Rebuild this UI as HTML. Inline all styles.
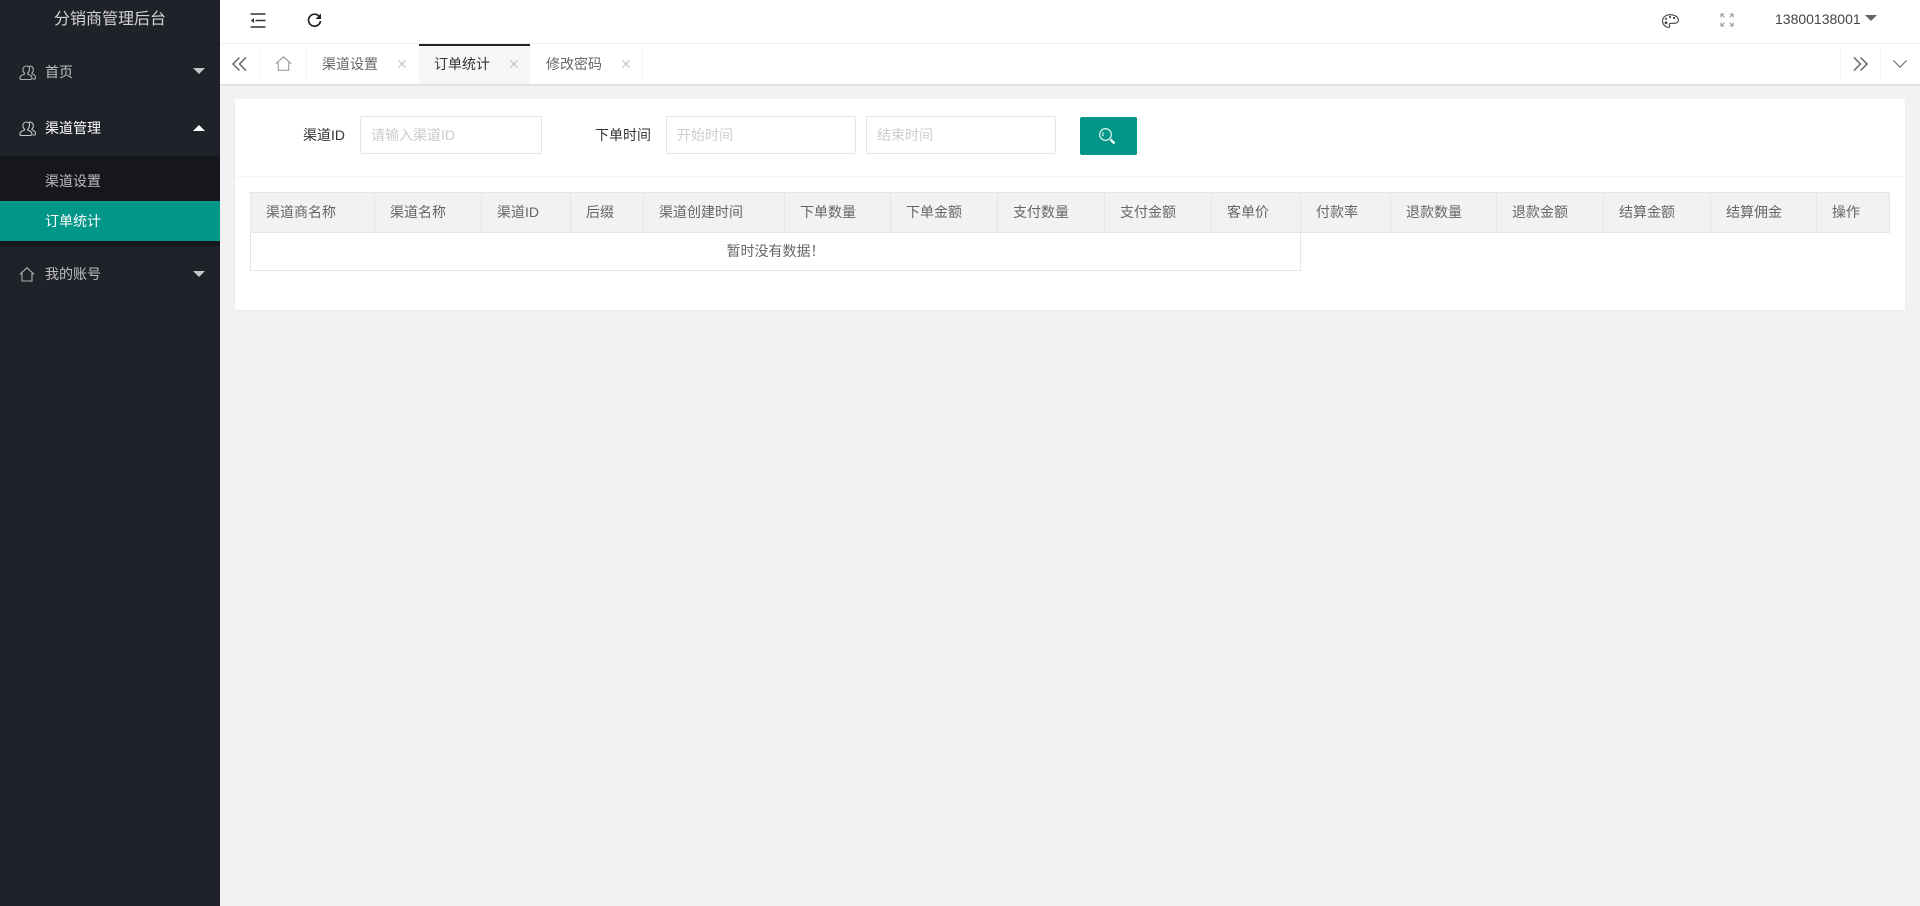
<!DOCTYPE html>
<html lang="zh-CN">
<head>
<meta charset="utf-8">
<title>分销商管理后台</title>
<style>
html,body{margin:0;padding:0;width:1920px;height:906px;overflow:hidden;background:#f2f2f2;font-family:"Liberation Sans","Noto Sans CJK SC",sans-serif;font-size:14px;color:#666}
div,span{box-sizing:border-box}
.a{position:absolute}
.t{position:absolute;white-space:nowrap;line-height:20px;height:20px}
svg{position:absolute;overflow:visible}
.th{position:absolute;top:193px;height:39px;line-height:38px;color:#666;padding-left:15px;border-left:1px solid #e6e6e6;white-space:nowrap}
.inp{position:absolute;top:116px;height:38px;background:#fff;border:1px solid #e6e6e6;border-radius:2px;line-height:36px;color:#ccc;padding-left:10px}
.tc{position:absolute;font-size:14px}
</style>
</head>
<body>
<!-- sidebar -->
<div class="a" style="left:0;top:0;width:220px;height:906px;background:#20222a"></div>
<div class="a" style="left:0;top:43px;width:220px;height:1px;background:#1d1f26"></div>
<div class="t" style="left:0;top:10px;width:220px;text-align:center;font-size:16px;color:rgba(255,255,255,.8)">分销商管理后台</div>

<svg style="left:19px;top:65px" width="17" height="15" viewBox="0 0 17 15" fill="none" stroke="#b0b1b4" stroke-width="1.1"><path d="M7.500 1c-2.200 0-3.600 1.600-3.600 3.800 0 1.400.6 2.600 1.600 3.400v.9c-1.800.6-3.600 1.500-4.300 2.600-.4.700-.2 2.800.3 2.800h10c1.300 0 1.700-1.600 1.200-2.800-.6-1.100-2.500-2-4-2.600v-.9c1-.8 1.600-2 1.600-3.400C11.100 2.600 9.700 1 7.500 1z"/><path d="M10 1.200c2.300-.5 4.300 1.100 4.300 3.500 0 1.400-.5 2.600-1.400 3.300v.9c1.500.5 2.800 1.300 3.300 2.200.5.900.3 2.900-.7 2.900h-2"/></svg>
<div class="t" style="left:45px;top:62px;color:rgba(255,255,255,.7)">首页</div>
<svg style="left:193px;top:68px" width="12" height="6"><path d="M0 0h12L6 6z" fill="#c6c7c9"/></svg>

<svg style="left:19px;top:121px" width="17" height="15" viewBox="0 0 17 15" fill="none" stroke="#c8c8ca" stroke-width="1.1"><path d="M7.500 1c-2.200 0-3.600 1.600-3.600 3.800 0 1.400.6 2.600 1.600 3.400v.9c-1.800.6-3.600 1.500-4.300 2.600-.4.700-.2 2.800.3 2.800h10c1.300 0 1.700-1.600 1.200-2.800-.6-1.100-2.500-2-4-2.600v-.9c1-.8 1.600-2 1.600-3.400C11.100 2.600 9.700 1 7.500 1z"/><path d="M10 1.200c2.300-.5 4.300 1.100 4.300 3.500 0 1.400-.5 2.600-1.400 3.300v.9c1.500.5 2.800 1.300 3.300 2.200.5.900.3 2.900-.7 2.900h-2"/></svg>
<div class="t" style="left:45px;top:118px;color:#fff">渠道管理</div>
<svg style="left:193px;top:125px" width="12" height="6"><path d="M0 6h12L6 0z" fill="#fff"/></svg>

<div class="a" style="left:0;top:156px;width:220px;height:90px;background:#16171c"></div>
<div class="t" style="left:45px;top:171px;color:rgba(255,255,255,.7)">渠道设置</div>
<div class="a" style="left:0;top:201px;width:220px;height:40px;background:#009688"></div>
<div class="t" style="left:45px;top:211px;color:#fff">订单统计</div>

<svg style="left:19px;top:267px" width="16" height="15" viewBox="0 0 16 15" fill="none" stroke="#b0b1b4" stroke-width="1.1"><path d="M.8 7.500 8 .8l7.200 6.700M3 6v8h10V6"/></svg>
<div class="t" style="left:45px;top:264px;color:rgba(255,255,255,.7)">我的账号</div>
<svg style="left:193px;top:271px" width="12" height="6"><path d="M0 0h12L6 6z" fill="#c6c7c9"/></svg>

<!-- top header -->
<div class="a" style="left:220px;top:0;width:1700px;height:44px;background:#fff;border-bottom:1px solid #f2f2f2"></div>
<svg style="left:250px;top:13px" width="16" height="15" viewBox="0 0 16 15" fill="none" stroke="#333" stroke-width="1.600"><path d="M.5 1h15M5.500 7.500h10M.5 14h15"/><path d="M4 5v5L.8 7.500z" fill="#333" stroke="none"/></svg>
<svg style="left:307px;top:13px" width="15" height="15" viewBox="0 0 15 15" fill="none" stroke="#222" stroke-width="1.700"><path d="M12.200 3.400A6 6 0 1 0 13.500 8"/><path d="M14 .5v5.500H8.500z" fill="#222" stroke="none"/></svg>
<svg style="left:1662px;top:14px" width="17" height="14" viewBox="0 0 17 14" fill="none" stroke="#444" stroke-width="1.100"><path d="M8 .7C3.800.7.600 3.400.6 7c0 3.500 2.900 6.300 6 6.300 1.200 0 1.400-1 .9-1.800-.6-1-.1-2.200 1.200-2.200h3.800c2 0 3.900-1 3.900-3C16.400 3 12.500.7 8 .7z"/><circle cx="4" cy="4.800" r="1.100" fill="#444" stroke="none"/><circle cx="8" cy="3" r="1.100" fill="#444" stroke="none"/><circle cx="12" cy="4" r="1.100" fill="#444" stroke="none"/><circle cx="4" cy="8.800" r="1.400" fill="#444" stroke="none"/></svg>
<svg style="left:1720px;top:13px" width="14" height="14" viewBox="0 0 14 14" fill="none" stroke="#999" stroke-width="1.100"><path d="M1 4.500V1h3.500M1 1l3.400 3.400M9.500 1H13v3.500M13 1 9.600 4.400M1 9.500V13h3.500M1 13l3.400-3.400M9.500 13H13V9.500M13 13 9.600 9.600"/></svg>
<div class="t" style="left:1775px;top:9px;color:#444">13800138001</div>
<svg style="left:1865px;top:15px" width="12" height="6"><path d="M0 0h12L6 6z" fill="#666"/></svg>

<!-- tab bar -->
<div class="a" style="left:220px;top:44px;width:1700px;height:40px;background:#fff;box-shadow:0 1px 2px rgba(0,0,0,.12)"></div>
<div class="a" style="left:259px;top:44px;width:1px;height:40px;background:#f6f6f6"></div>
<div class="a" style="left:306px;top:44px;width:1px;height:40px;background:#f6f6f6"></div>
<div class="a" style="left:642px;top:44px;width:1px;height:40px;background:#f6f6f6"></div>
<div class="a" style="left:1840px;top:44px;width:1px;height:40px;background:#f6f6f6"></div>
<div class="a" style="left:1880px;top:44px;width:1px;height:40px;background:#f6f6f6"></div>
<svg style="left:232px;top:57px" width="15" height="14" viewBox="0 0 15 14" fill="none" stroke="#666" stroke-width="1.500"><path d="M7.500.5 1 7l6.500 6.500M14 .5 7.500 7l6.500 6.500"/></svg>
<svg style="left:275px;top:56px" width="17" height="15" viewBox="0 0 17 15" fill="none" stroke="#999" stroke-width="1.100"><path d="M.8 7.800 8.500.8l7.700 7M3.300 6.500v7.800h10.400V6.500"/></svg>

<div class="t" style="left:322px;top:54px;color:#666">渠道设置</div>
<svg style="left:398px;top:60px" width="8" height="8"><path d="M.5.500l7 7M7.500.5l-7 7" stroke="#bbb" fill="none"/></svg>

<div class="a" style="left:419px;top:44px;width:111px;height:40px;background:#f6f6f6"></div>
<div class="a" style="left:419px;top:44px;width:111px;height:2px;background:#20222a"></div>
<div class="t" style="left:434px;top:54px;color:#333">订单统计</div>
<svg style="left:510px;top:60px" width="8" height="8"><path d="M.5.500l7 7M7.500.5l-7 7" stroke="#bbb" fill="none"/></svg>

<div class="t" style="left:546px;top:54px;color:#666">修改密码</div>
<svg style="left:622px;top:60px" width="8" height="8"><path d="M.5.500l7 7M7.500.5l-7 7" stroke="#bbb" fill="none"/></svg>

<svg style="left:1853px;top:57px" width="15" height="14" viewBox="0 0 15 14" fill="none" stroke="#666" stroke-width="1.500"><path d="M1 .5 7.500 7 1 13.500M7.500.5 14 7l-6.500 6.500"/></svg>
<svg style="left:1893px;top:60px" width="14" height="8" viewBox="0 0 14 8" fill="none" stroke="#666" stroke-width="1.100"><path d="M.5.500 7 7.200 13.500.5"/></svg>

<!-- card -->
<div class="a" style="left:235px;top:99px;width:1670px;height:211px;background:#fff;border-radius:2px;box-shadow:0 1px 2px rgba(0,0,0,.05)"></div>
<div class="a" style="left:235px;top:176px;width:1670px;height:1px;background:#f6f6f6"></div>

<div class="t" style="left:303px;top:125px;color:#333">渠道ID</div>
<div class="inp" style="left:360px;width:182px">请输入渠道ID</div>
<div class="t" style="left:595px;top:125px;color:#333">下单时间</div>
<div class="inp" style="left:666px;width:190px">开始时间</div>
<div class="inp" style="left:866px;width:190px">结束时间</div>
<div class="a" style="left:1080px;top:117px;width:57px;height:38px;background:#009688;border-radius:2px"></div>
<svg style="left:1099px;top:128px" width="17" height="17" viewBox="0 0 17 17" fill="none" stroke="#fff" stroke-width="1.100"><circle cx="6.500" cy="6.500" r="5.800"/><path d="M4.300 4.200c-.7.800-.7 3 0 4" stroke-width="1"/><path d="M11.500 11.500l4 4" stroke-width="2.400"/></svg>

<!-- table -->
<div class="a" style="left:250px;top:192px;width:1640px;height:41px;background:#f2f2f2;border:1px solid #e6e6e6"></div>
<div class="th" style="left:250px;border-left:0;padding-left:16px">渠道商名称</div>
<div class="th" style="left:374px">渠道名称</div>
<div class="th" style="left:481px">渠道ID</div>
<div class="th" style="left:570px">后缀</div>
<div class="th" style="left:643px">渠道创建时间</div>
<div class="th" style="left:784px">下单数量</div>
<div class="th" style="left:890px">下单金额</div>
<div class="th" style="left:997px">支付数量</div>
<div class="th" style="left:1104px">支付金额</div>
<div class="th" style="left:1211px">客单价</div>
<div class="th" style="left:1300px">付款率</div>
<div class="th" style="left:1390px">退款数量</div>
<div class="th" style="left:1496px">退款金额</div>
<div class="th" style="left:1603px">结算金额</div>
<div class="th" style="left:1710px">结算佣金</div>
<div class="th" style="left:1816px">操作</div>
<div class="a" style="left:250px;top:232px;width:1051px;height:39px;border:1px solid #e6e6e6;border-top:0;text-align:center;line-height:38px;color:#666">暂时没有数据！</div>
</body>
</html>
